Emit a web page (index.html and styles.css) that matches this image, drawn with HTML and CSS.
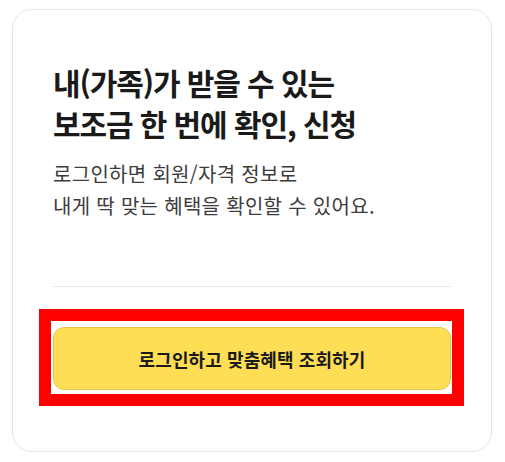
FILE: index.html
```html
<!DOCTYPE html>
<html lang="ko">
<head>
<meta charset="utf-8">
<link rel="stylesheet" href="styles.css">
</head>
<body>
<div class="card">
  <h2 class="title">내(가족)가 받을 수 있는<br>보조금 한 번에 확인, 신청</h2>
  <p class="desc">로그인하면 회원/자격 정보로<br>내게 딱 맞는 혜택을 확인할 수 있어요.</p>
  <hr class="divider">
  <div class="action">
    <button class="login-btn" type="button">로그인하고 맞춤혜택 조회하기</button>
  </div>
</div>
</body>
</html>
```

FILE: styles.css
```css
html, body {
  margin: 0;
  padding: 0;
  background: #ffffff;
}
body {
  font-family: "Noto Sans CJK KR", "Noto Sans", sans-serif;
  padding: 9px 13px 0 12px;
}
.card {
  box-sizing: border-box;
  width: 480px;
  height: 443px;
  border: 1px solid #e3e5e8;
  border-radius: 20px;
  padding: 52px 40px 0 40px;
  background: #fff;
}
.title {
  margin: 0;
  font-size: 30px;
  line-height: 41px;
  font-weight: 700;
  letter-spacing: -1.1px;
  color: #1a1a1a;
}
.desc {
  margin: 14px 0 0;
  font-size: 20px;
  line-height: 32px;
  font-weight: 400;
  letter-spacing: 0.3px;
  color: #3c3c3c;
}
.divider {
  margin: 64px 0 0;
  border: 0;
  border-top: 1px solid #e4e6ea;
  height: 0;
}
.action {
  margin-top: 40px;
}
.login-btn {
  position: relative;
  display: block;
  box-sizing: border-box;
  width: 100%;
  height: 63px;
  border: 1px solid #e6c54a;
  border-radius: 11px;
  background: #ffde55;
  font-family: "Noto Sans CJK KR", "Noto Sans", sans-serif;
  font-size: 18px;
  font-weight: 700;
  letter-spacing: 0.1px;
  color: #1a1a1a;
  cursor: pointer;
}
.login-btn::after {
  content: "";
  position: absolute;
  top: -19px;
  left: -15px;
  right: -14px;
  bottom: -17px;
  border: 12px solid #ff0000;
  pointer-events: none;
}
```
